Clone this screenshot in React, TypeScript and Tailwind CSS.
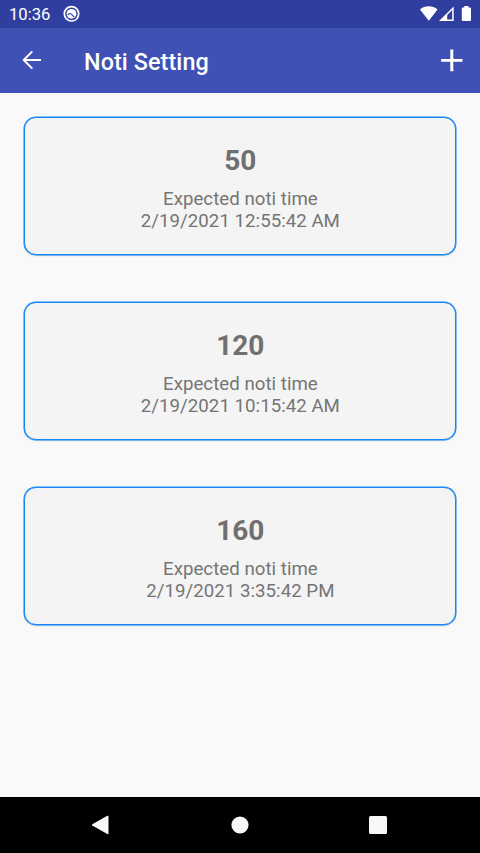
const reminders = [
  { amount: "50", time: "2/19/2021 12:55:42 AM" },
  { amount: "120", time: "2/19/2021 10:15:42 AM" },
  { amount: "160", time: "2/19/2021 3:35:42 PM" },
];

function StatusBar() {
  return (
    <div className="flex h-[28px] shrink-0 items-start justify-between bg-[#303f9f] pl-[9px] pr-[8px] text-white">
      <div className="flex">
        <span className="mt-[5px] w-[54px] text-[16.6px] leading-[20px]">10:36</span>
        <svg className="mt-[5px]" width="17" height="17" viewBox="0 0 17 17" fill="none">
          <circle cx="8.5" cy="8.8" r="7.2" stroke="#fff" strokeWidth="1.7" />
          <circle cx="8.5" cy="8.8" r="4.9" fill="#fff" />
          <path d="M5 10.2C5.5 8.2 7.300 8.100 8.500 9.300L11.300 12.200" stroke="#303f9f" strokeWidth="1.200" />
          <path d="M11.200 14.800L13.200 12.800" stroke="#303f9f" strokeWidth="1" />
        </svg>
      </div>
      <svg className="mt-[5px]" width="52" height="18" viewBox="0 0 52 18">
        <path d="M0 4.500C4.800.3 12.700.3 17.500 4.500L8.800 15.700Z" fill="#fff" />
        <path d="M19 15.900L33.700 1.600V15.900Z" fill="#fff" />
        <path d="M27.200 9.900L32.200 5V14.400H27.200Z" fill="#303f9f" />
        <path d="M42.800 2.500H44.300V1H48.500V2.500H50Q51 2.500 51 3.500V15Q51 16 50 16H42.800Q41.800 16 41.800 15V3.500Q41.800 2.500 42.800 2.500Z" fill="#fff" />
      </svg>
    </div>
  );
}

function AppBar() {
  return (
    <header className="flex h-[65px] shrink-0 items-center bg-[#3f51b5] pl-[22px] pr-[17px] text-white">
      <svg className="-mt-px" width="20" height="20" viewBox="0 0 20 20" fill="none" stroke="#fff" strokeWidth="2">
        <path d="M19 10H2M10.3 1.4L1.7 10L10.3 18.6" />
      </svg>
      <h1 className="ml-[42px] mt-[2px] flex-1 text-[23.33px] font-medium leading-[28px] tracking-[0.1px]">
        Noti Setting
      </h1>
      <svg width="23" height="23" viewBox="0 0 23 23">
        <path d="M10.300.5h3v9.500h9.200v2.800h-9.200v9.500h-3v-9.500H1.100V10h9.200z" fill="#fff" />
      </svg>
    </header>
  );
}

function ReminderCard({ amount, time }: { amount: string; time: string }) {
  return (
    <section className="h-[138px] rounded-[12px] border border-[#1686f5] bg-[#f4f4f4] pt-[26px] text-center text-[#757575] shadow-[0_0_0_0.5px_#1686f5,0_1px_2px_rgba(0,0,0,0.14)]">
      <h2 className="pl-[0.5px] text-[28px] font-bold leading-[33px] text-[#707070]">{amount}</h2>
      <p className="mt-[12px] pl-[0.8px] text-[18.67px] leading-[21.9px] tracking-[0.03px]">
        Expected noti time
        <br />
        {time}
      </p>
    </section>
  );
}

function NavigationBar() {
  return (
    <nav className="flex h-[56px] shrink-0 items-center justify-between bg-black pl-[91px] pr-[93px]">
      <svg width="18" height="20" viewBox="0 0 18 20">
        <path d="M1.300 9.300L16.300.8Q17.500.3 17.500 1.500V18.500Q17.500 19.700 16.300 19.100L1.300 10.600Q.5 10 1.300 9.300Z" fill="#f8f8f8" />
      </svg>
      <svg className="ml-[2px]" width="18" height="18" viewBox="0 0 18 18">
        <circle cx="9" cy="9" r="8.600" fill="#f8f8f8" />
      </svg>
      <div className="size-[18px] rounded-[1.5px] bg-[#f8f8f8]" />
    </nav>
  );
}

export default function App() {
  return (
    <div className="flex h-[853px] w-[480px] flex-col overflow-hidden bg-[#f9f9f9] font-[Roboto,sans-serif]">
      <StatusBar />
      <AppBar />
      <main className="flex flex-1 flex-col gap-[47.2px] px-[24px] pt-[24px]">
        {reminders.map((item) => (
          <ReminderCard key={item.amount} {...item} />
        ))}
      </main>
      <NavigationBar />
    </div>
  );
}
